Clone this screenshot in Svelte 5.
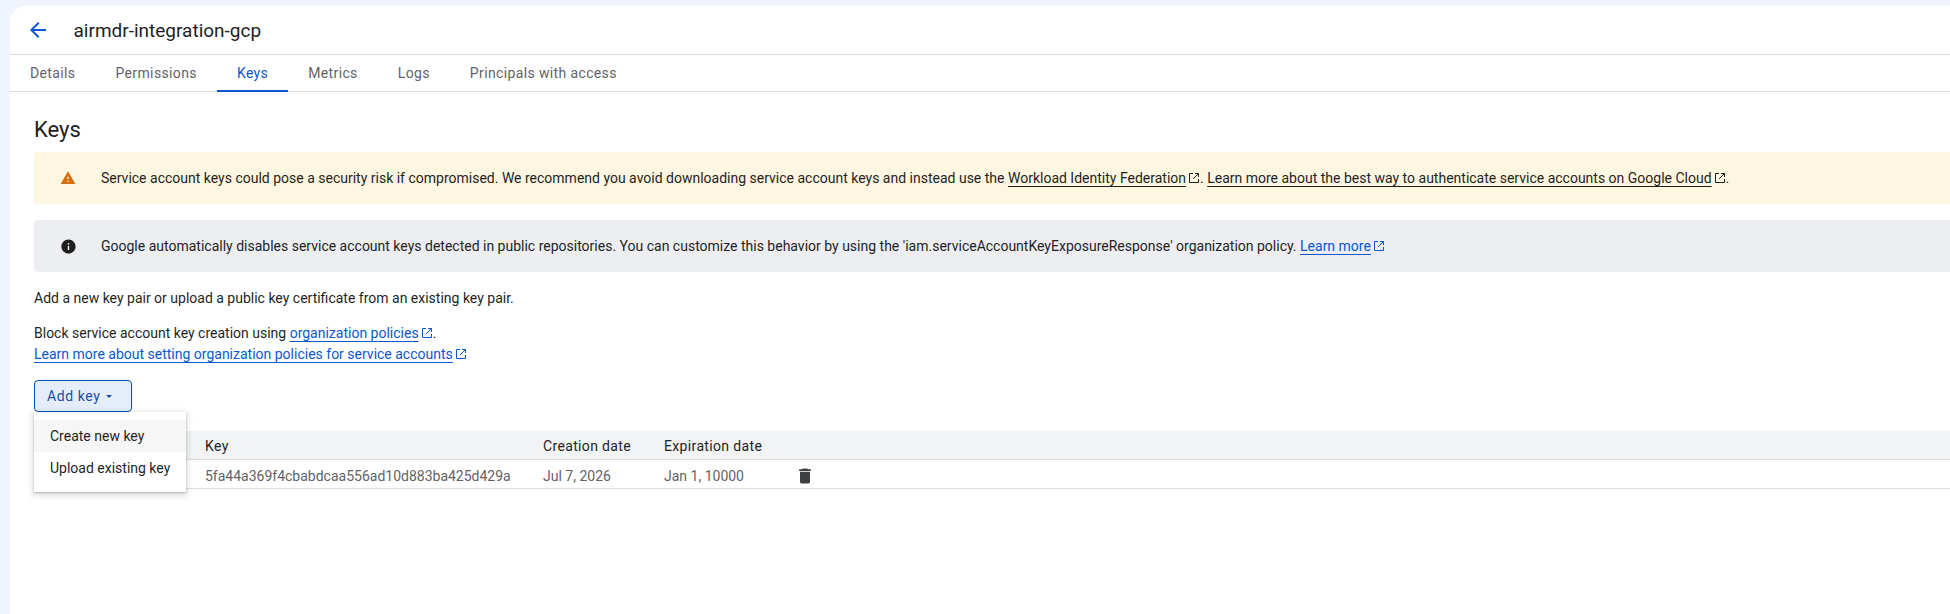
<script>
  const tabs = ['Details', 'Permissions', 'Keys', 'Metrics', 'Logs', 'Principals with access'];
</script>

{#snippet ext()}
  <svg class="ext" viewBox="0 0 12 12" aria-hidden="true"><path d="M5 1.5H1.5v9h9V7M7 1.5h3.5V5M10.5 1.5 5.2 6.8" fill="none" stroke="currentColor" stroke-width="1"/></svg>
{/snippet}

<div class="panel">
  <header class="top">
    <svg class="back" viewBox="0 0 24 24" aria-hidden="true"><path d="M20 11H7.83l5.59-5.59L12 4l-8 8 8 8 1.41-1.41L7.83 13H20z" fill="#0b57d0"/></svg>
    <h1>airmdr-integration-gcp</h1>
  </header>
  <nav class="tabs">
    {#each tabs as t}
      <span class="tab" class:active={t === 'Keys'}>{t}</span>
    {/each}
  </nav>
  <main class="content">
    <h2>Keys</h2>
    <div class="banner warn">
      <svg class="bicon" viewBox="0 0 24 24" aria-hidden="true"><path d="M1 21h22L12 2 1 21zm12-3h-2v-2h2v2zm0-4h-2v-4h2v4z" fill="#d56e0c"/></svg>
      <p>Service account keys could pose a security risk if compromised. We recommend you avoid downloading service account keys and instead use the <a class="dark">Workload Identity Federation</a>{@render ext()}. <a class="dark">Learn more about the best way to authenticate service accounts on Google Cloud</a>{@render ext()}.</p>
    </div>
    <div class="banner info">
      <svg class="bicon" viewBox="0 0 24 24" aria-hidden="true"><path d="M12 2C6.48 2 2 6.48 2 12s4.48 10 10 10 10-4.48 10-10S17.52 2 12 2zm1 15h-2v-6h2v6zm0-8h-2V7h2v2z" fill="#1f1f1f"/></svg>
      <p>Google automatically disables service account keys detected in public repositories. You can customize this behavior by using the 'iam.serviceAccountKeyExposureResponse' organization policy. <a>Learn more</a>{@render ext()}</p>
    </div>
    <p class="line first">Add a new key pair or upload a public key certificate from an existing key pair.</p>
    <p class="line second">Block service account key creation using <a>organization policies</a>{@render ext()}.</p>
    <p class="line third"><a>Learn more about setting organization policies for service accounts</a>{@render ext()}</p>

    <div class="addwrap">
      <button class="add">Add key <span class="caret"></span></button>
      <div class="menu">
        <div class="item hover">Create new key</div>
        <div class="item">Upload existing key</div>
      </div>
    </div>

    <div class="table">
      <div class="row head">
        <span></span><span>Key</span><span>Creation date</span><span>Expiration date</span><span></span>
      </div>
      <div class="row body">
        <span></span><span>5fa44a369f4cbabdcaa556ad10d883ba425d429a</span><span>Jul 7, 2026</span><span>Jan 1, 10000</span>
        <svg class="trash" viewBox="0 0 24 24" aria-hidden="true"><path d="M6 19c0 1.1.9 2 2 2h8c1.1 0 2-.9 2-2V7H6v12zM19 4h-3.5l-1-1h-5l-1 1H5v2h14V4z" fill="#3c4043"/></svg>
      </div>
    </div>
  </main>
</div>

<style>
  :global(body) {
    margin: 0;
    background: #f0f4fd;
    overflow: hidden;
  }
  .panel {
    margin: 6px 0 0 10px;
    height: 608px;
    background: #fff;
    border-top-left-radius: 16px;
    font-family: Roboto, "Liberation Sans", sans-serif;
    font-size: 14px;
    color: #1f1f1f;
  }
  .top {
    height: 48px;
    display: flex;
    align-items: center;
    border-bottom: 1px solid #dadce0;
  }
  .back { width: 24px; height: 24px; margin-left: 16px; }
  h1 {
    margin: 0 0 0 23.5px;
    font-size: 19px;
    font-weight: 400;
  }
  .tabs {
    height: 36px;
    display: flex;
    border-bottom: 1px solid #dadce0;
  }
  .tab {
    padding: 0 20px;
    display: flex;
    align-items: center;
    color: #5f6368;
    letter-spacing: 0.37px;
    position: relative;
  }
  .tab.active { color: #0b57d0; }
  .tab.active::after {
    content: '';
    position: absolute;
    left: 0; right: 0; bottom: -1px;
    height: 2px;
    background: #0b57d0;
  }
  .content { padding: 24px 0 0 24px; }
  h2 {
    margin: 0 0 8px;
    font-size: 22px;
    line-height: 28px;
    font-weight: 400;
  }
  .banner {
    height: 52px;
    display: flex;
    align-items: center;
    border-radius: 4px 0 0 4px;
    margin-bottom: 16px;
  }
  .banner p { margin: 0; white-space: nowrap; }
  .warn { background: #fdf6e0; }
  .info { background: #eceef2; margin-bottom: 16px; }
  .bicon { width: 16px; height: 16px; margin: 0 25px 0 26px; flex: none; }
  .info .bicon { width: 17px; height: 17px; margin: 0 24.5px 0 25.5px; }
  .line { margin: 0; line-height: 20px; white-space: nowrap; }
  .second { margin-top: 15px; }
  .third { margin-top: 1px; }
  a {
    color: #0b57d0;
    text-decoration: underline;
    text-decoration-skip-ink: none;
    text-underline-offset: 3px;
  }
  a.dark { color: #1f1f1f; }
  .ext { width: 12px; height: 12px; margin-left: 2px; vertical-align: -1px; color: #0b57d0; }
  .warn .ext { color: #1f1f1f; }
  .addwrap { position: relative; margin-top: 16px; }
  .add {
    width: 98px;
    height: 32px;
    border: 1px solid #0b50b0;
    border-radius: 4px;
    background: #e6edfa;
    color: #174ea6;
    font: inherit;
    letter-spacing: 0.6px;
    padding: 0 0 0 12px;
    display: flex;
    align-items: center;
    justify-content: flex-start;
    gap: 5px;
  }
  .caret {
    width: 0; height: 0;
    border-left: 3.5px solid transparent;
    border-right: 3.5px solid transparent;
    border-top: 3.5px solid currentColor;
  }
  .menu {
    position: absolute;
    left: 0; top: 32px;
    width: 152px;
    padding: 8px 0;
    background: #fff;
    box-shadow: 0 1px 2px rgba(60,64,67,.3), 0 2px 6px 2px rgba(60,64,67,.15);
    z-index: 2;
  }
  .item { height: 32px; line-height: 32px; padding-left: 16px; font-size: 14px; color: #1f1f1f; }
  .item.hover { background: #f6f6f6; }
  .table { margin-top: 19px; }
  .row {
    display: grid;
    grid-template-columns: 171px 338px 121px 131px 1fr;
    align-items: center;
    border-bottom: 1px solid #dadce0;
    height: 28px;
  }
  .row span { padding-top: 2px; }
  .head { background: #f1f3f4; color: #1f1f1f; }
  .head span { letter-spacing: 0.35px; }
  .body { color: #5f6368; }
  .body span { padding-top: 4px; }
  .trash { width: 20px; height: 20px; margin-top: 3px; }
</style>
